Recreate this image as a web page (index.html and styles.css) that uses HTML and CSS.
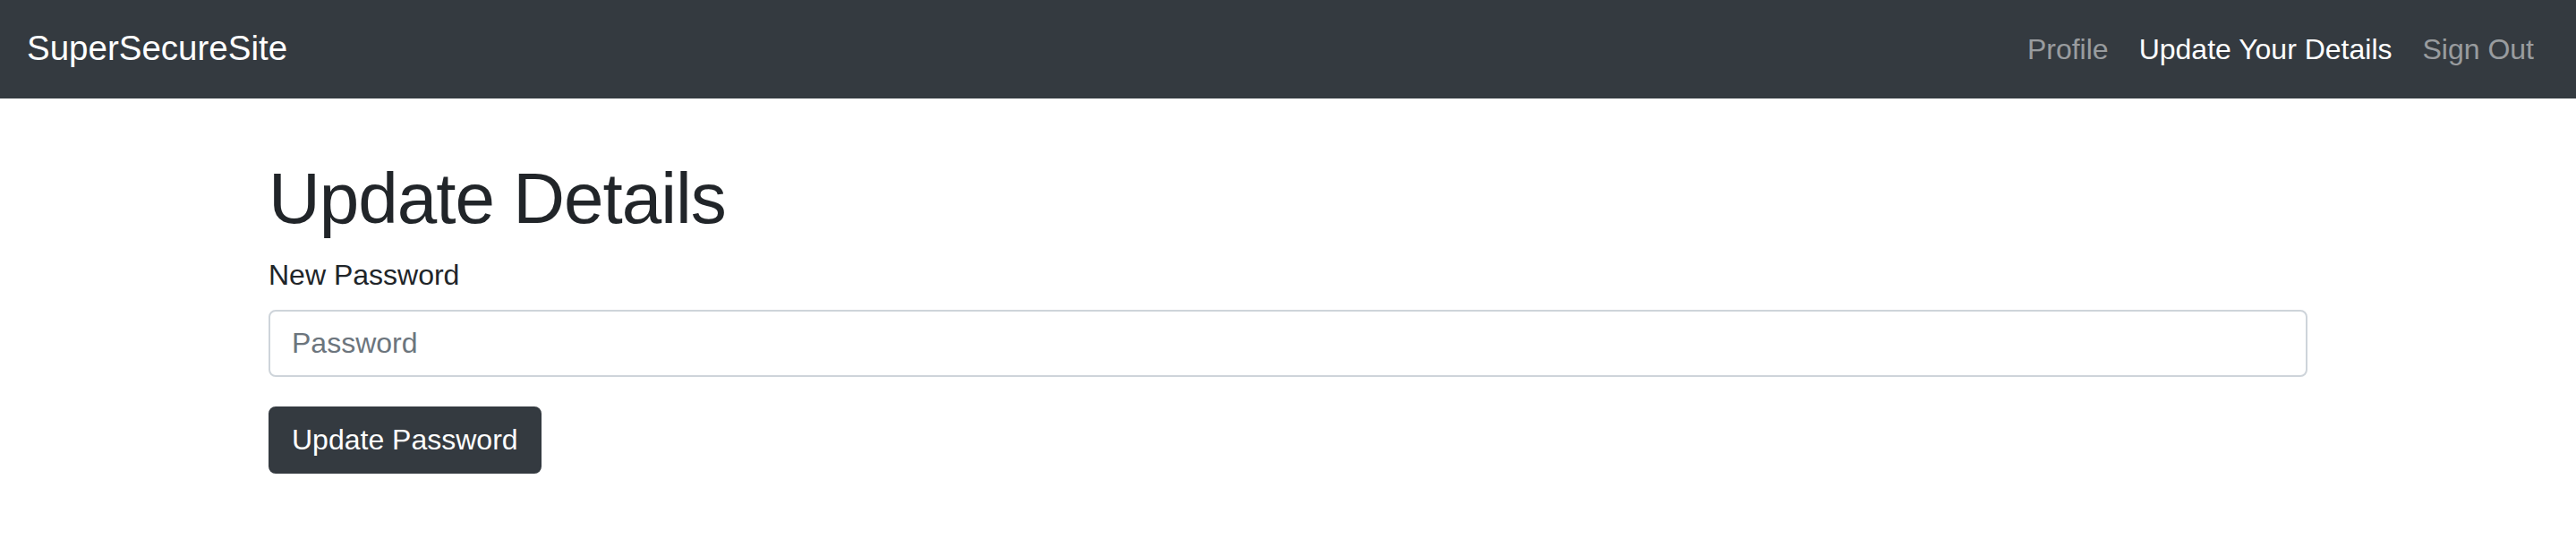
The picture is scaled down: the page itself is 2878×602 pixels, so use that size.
FILE: index.html
```html
<!DOCTYPE html>
<html lang="en">
<head>
<meta charset="utf-8">
<title>Update Details - SuperSecureSite</title>
<link rel="stylesheet" href="styles.css">
</head>
<body>
<nav class="navbar">
  <a class="brand" href="#">SuperSecureSite</a>
  <ul class="nav">
    <li><a class="nav-link" href="#">Profile</a></li>
    <li><a class="nav-link active" href="#">Update Your Details</a></li>
    <li><a class="nav-link" href="#">Sign Out</a></li>
  </ul>
</nav>
<main class="container">
  <h1 class="title">Update Details</h1>
  <form class="form">
    <div class="form-group">
      <label class="label" for="pw">New Password</label>
      <input class="input" id="pw" type="password" placeholder="Password">
    </div>
    <button class="btn" type="button">Update Password</button>
  </form>
</main>
</body>
</html>
```
FILE: styles.css
```css
* { box-sizing: border-box; }
html, body { margin: 0; padding: 0; }
body {
  font-family: "Liberation Sans", Arial, sans-serif;
  font-size: 32px;
  line-height: 1.5;
  color: #212529;
  background: #fff;
}
.navbar {
  height: 110px;
  background: #343a40;
  display: flex;
  align-items: center;
  justify-content: space-between;
  padding: 0 30px 0 30px;
}
.brand {
  color: #fff;
  text-decoration: none;
  font-size: 38.5px;
  line-height: 57px;
  margin-bottom: 4px;
}
.nav {
  list-style: none;
  margin: 0;
  padding: 0;
  display: flex;
}
.nav-link {
  display: block;
  padding: 0 17px;
  line-height: 48px;
  color: rgba(255, 255, 255, 0.5);
  text-decoration: none;
}
.nav-link.active { color: #fff; }
.container {
  max-width: 2278px;
  margin: 0 auto;
  padding-top: 64px;
}
.title {
  margin: 0 0 13px 0;
  font-size: 80px;
  font-weight: 400;
  line-height: 96px;
  letter-spacing: -1px;
}
.form-group { margin-bottom: 33px; }
.label {
  display: block;
  line-height: 48px;
  margin-bottom: 15px;
}
.input {
  display: block;
  width: 100%;
  height: 75px;
  padding: 0 24px;
  font-family: inherit;
  font-size: 32px;
  color: #495057;
  background: #fff;
  border: 2px solid #ced4da;
  border-radius: 8px;
  outline: none;
}
.input::placeholder { color: #6c757d; opacity: 1; }
.btn {
  display: inline-block;
  height: 75px;
  padding: 0 24px;
  font-family: inherit;
  font-size: 32px;
  color: #fff;
  background: #343a40;
  border: 2px solid #343a40;
  border-radius: 8px;
  cursor: pointer;
}
```
